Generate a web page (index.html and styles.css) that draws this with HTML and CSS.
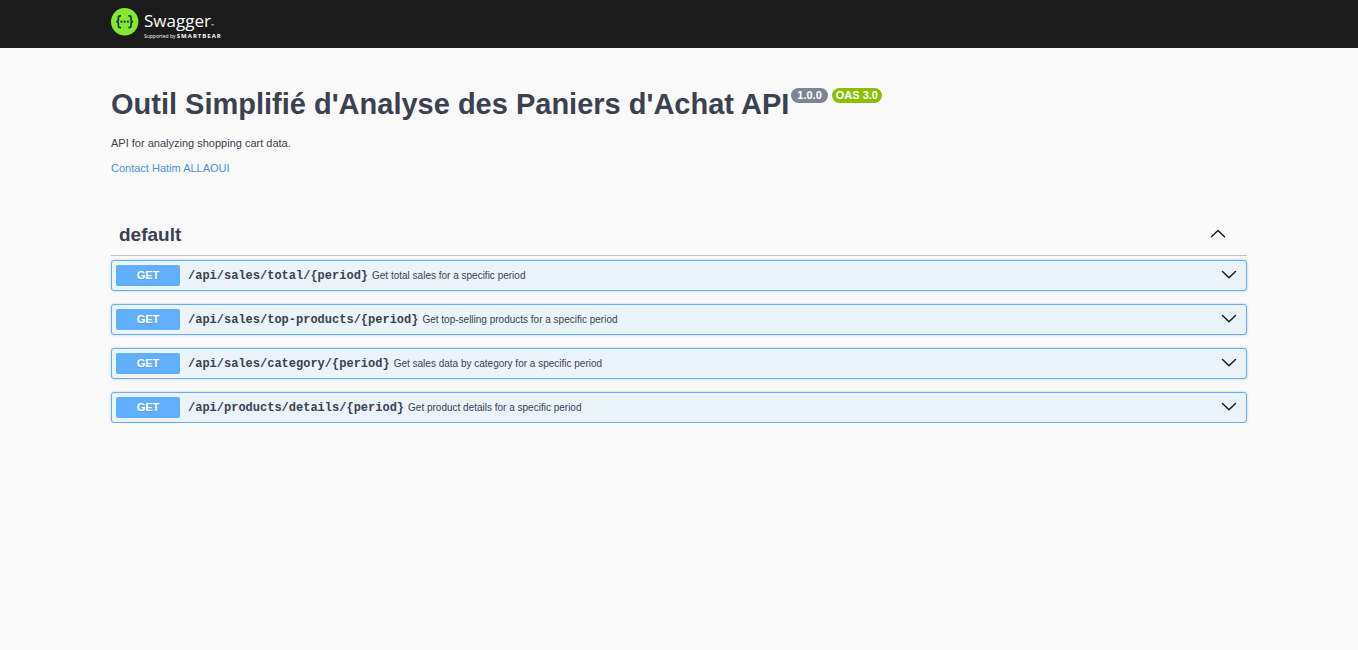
FILE: index.html
```html
<!DOCTYPE html>
<html lang="en">
<head>
<meta charset="utf-8">
<meta name="viewport" content="width=device-width, initial-scale=1">
<title>Swagger UI</title>
<link rel="stylesheet" href="styles.css">
</head>
<body>
<svg class="sprite" aria-hidden="true">
  <symbol id="chevron" viewBox="0 0 16 16"><path d="M1.5 3.5 8 9.7 14.5 3.5" fill="none" stroke="currentColor" stroke-width="1.5" stroke-linecap="round" stroke-linejoin="round"/></symbol>
  <symbol id="chevron-up" viewBox="0 0 16 16"><path d="M1.5 9.7 8 3.5 14.5 9.7" fill="none" stroke="currentColor" stroke-width="1.5" stroke-linecap="round" stroke-linejoin="round"/></symbol>
</svg>
<header class="topbar">
  <div class="wrapper">
    <a class="logo" href="#" aria-label="Swagger, supported by SmartBear">
      <svg class="logo-mark" viewBox="0 0 28 28" aria-hidden="true">
        <circle cx="13.7" cy="13.7" r="13.7" fill="#85ea2d"/>
        <g fill="none" stroke="#173647" stroke-width="1.7">
          <path d="M10 7.8H9.1Q7.4 7.8 7.4 9.4V11.5Q7.4 13.7 5.3 13.7Q7.4 13.7 7.4 15.9V18Q7.4 19.6 9.1 19.6H10"/>
          <path d="M17.4 7.8H18.3Q20 7.8 20 9.4V11.5Q20 13.7 22.1 13.7Q20 13.7 20 15.9V18Q20 19.6 18.3 19.6H17.4"/>
        </g>
        <g fill="#173647"><circle cx="10.5" cy="13.7" r="1.1"/><circle cx="13.7" cy="13.7" r="1.1"/><circle cx="16.9" cy="13.7" r="1.1"/></g>
      </svg>
      <span class="logo-text">
        <span class="logo-name">Swagger<span class="logo-tm">™</span></span>
        <span class="logo-by">Supported by <b class="logo-brand">SMARTBEAR</b></span>
      </span>
    </a>
  </div>
</header>
<main class="wrapper">
  <section class="info">
    <div class="heading">
      <h1 class="title">Outil Simplifié d'Analyse des Paniers d'Achat API</h1>
      <span class="badges"><span class="badge">1.0.0</span><span class="badge badge-oas">OAS 3.0</span></span>
    </div>
    <p class="description">API for analyzing shopping cart data.</p>
    <a class="contact" href="#">Contact Hatim ALLAOUI</a>
  </section>
  <section>
    <div class="tag">
      <h2 class="tag-name">default</h2>
      <button class="tag-toggle" aria-label="Collapse operations"><svg class="chevron"><use href="#chevron-up"/></svg></button>
    </div>
    <div class="operations">
      <button class="operation"><span class="method">GET</span><span class="path">/api/sales/total/{period}</span><span class="summary">Get total sales for a specific period</span><svg class="chevron"><use href="#chevron"/></svg></button>
      <button class="operation"><span class="method">GET</span><span class="path">/api/sales/top-products/{period}</span><span class="summary">Get top-selling products for a specific period</span><svg class="chevron"><use href="#chevron"/></svg></button>
      <button class="operation"><span class="method">GET</span><span class="path">/api/sales/category/{period}</span><span class="summary">Get sales data by category for a specific period</span><svg class="chevron"><use href="#chevron"/></svg></button>
      <button class="operation"><span class="method">GET</span><span class="path">/api/products/details/{period}</span><span class="summary">Get product details for a specific period</span><svg class="chevron"><use href="#chevron"/></svg></button>
    </div>
  </section>
</main>
</body>
</html>
```
FILE: styles.css
```css
* { box-sizing: border-box; }
body {
  margin: 0;
  background: #fafafa;
  color: #3b4151;
  font-family: "Liberation Sans", Arial, sans-serif;
}
h1, h2, p { margin: 0; }
button { font: inherit; color: inherit; cursor: pointer; }
.sprite { display: none; }
.wrapper {
  max-width: 1168px;
  margin: 0 auto;
  padding: 0 16px;
}
.topbar { background: #1b1b1b; padding: 8px 0; }
.logo {
  display: flex;
  gap: 5px;
  width: fit-content;
  height: 32px;
  color: #fff;
  text-decoration: none;
  font-family: "Open Sans", sans-serif;
}
.logo-mark { width: 28px; height: 28px; }
.logo-text { display: flex; flex-direction: column; }
.logo-name { font-size: 17px; line-height: 25px; }
.logo-tm { font-size: 4px; line-height: 1; }
.logo-by { font-size: 5px; line-height: 7px; white-space: nowrap; }
.logo-brand { font-size: 6px; line-height: 1; letter-spacing: 1px; }

.info { padding: 40px 0; }
.heading { display: flex; align-items: flex-start; gap: 2px; }
.title { font-size: 29px; line-height: 32px; }
.badges { display: flex; gap: 4px; }
.badge {
  padding: 0 6px;
  border-radius: 8px;
  background: #7d8492;
  color: #fff;
  font-size: 11px;
  font-weight: 700;
  line-height: 15px;
  white-space: nowrap;
}
.badge-oas { background: #89bf04; padding: 0 4px; }
.description { margin: 17px 0 12px; font-size: 11px; line-height: 13px; }
.contact {
  display: block;
  width: fit-content;
  color: #4990e2;
  font-size: 11px;
  line-height: 13px;
  text-decoration: none;
}

.tag {
  display: flex;
  align-items: center;
  justify-content: space-between;
  padding: 8px 21px 8px 8px;
  border-bottom: 1px solid rgba(59, 65, 81, .3);
}
.tag-name { font-size: 19px; line-height: 24px; }
.tag-toggle { display: flex; padding: 0; border: 0; background: none; }
.chevron { width: 16px; height: 16px; color: #1b1b1b; flex: none; }

.operations { display: flex; flex-direction: column; gap: 13px; padding-top: 4px; }
.operation {
  display: flex;
  align-items: center;
  width: 100%;
  padding: 4px 9px 4px 4px;
  border: 1px solid #61affe;
  border-radius: 3px;
  background: #ebf3fb;
  box-shadow: 0 0 3px rgba(0, 0, 0, .19);
  text-align: left;
}
.method {
  width: 64px;
  margin-right: 8px;
  border-radius: 2px;
  background: #61affe;
  color: #fff;
  font-size: 11px;
  font-weight: 700;
  line-height: 21px;
  text-align: center;
  text-shadow: 0 1px 0 rgba(0, 0, 0, .1);
}
.path {
  margin-right: 4px;
  font-family: "Liberation Mono", monospace;
  font-size: 12px;
  font-weight: 700;
}
.summary { flex: 1; font-size: 10px; }
```
